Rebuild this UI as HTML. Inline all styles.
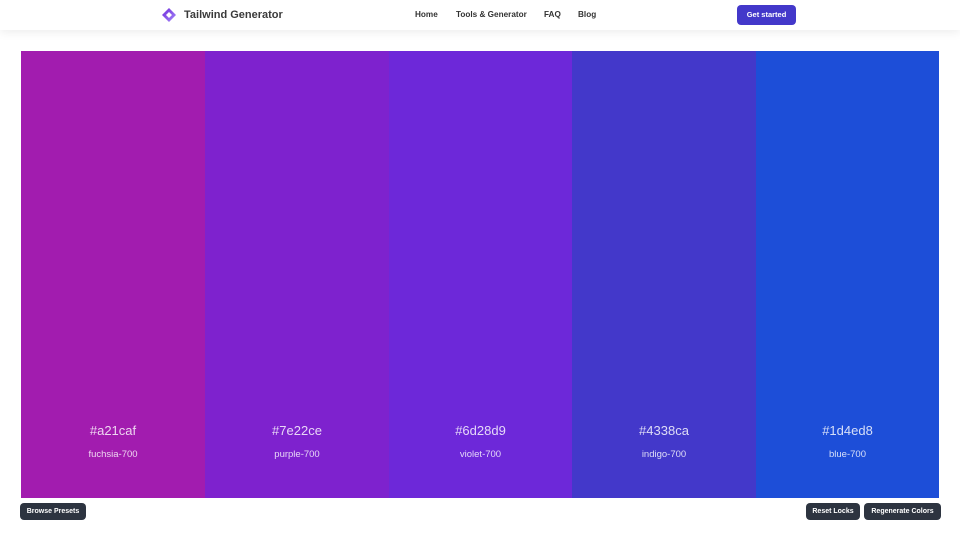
<!DOCTYPE html>
<html><head><meta charset="utf-8"><style>
*{margin:0;padding:0;box-sizing:border-box}
body{width:960px;height:540px;background:#fff;font-family:"Liberation Sans",sans-serif;position:relative;overflow:hidden}
.hdr{position:absolute;left:0;top:0;width:960px;height:30px;background:#fff;box-shadow:0 2px 10px rgba(0,0,0,0.08)}
.logo{position:absolute;left:161px;top:7px}
.brand{position:absolute;left:184px;top:9px;font-size:11px;font-weight:bold;color:#3a3a3a}
.nav{position:absolute;top:10px;font-size:8.2px;font-weight:bold;color:#333}
.btn{position:absolute;left:737px;top:5px;width:59px;height:20px;background:#4338ca;border-radius:4px;color:#fff;font-size:7.5px;font-weight:bold;text-align:center;line-height:20px}
.sw{position:absolute;top:51px;height:447px;color:rgba(255,255,255,0.82);text-align:center}
.hex{position:absolute;top:372px;width:100%;font-size:13px}
.nm{position:absolute;top:398px;width:100%;font-size:9.5px}
.b{position:absolute;top:503px;height:17px;background:#2d3440;border-radius:4px;color:#fff;font-size:7px;font-weight:bold;line-height:18px;text-align:center}
</style></head><body>
<div class="hdr">
<svg class="logo" width="16" height="16" viewBox="0 0 16 16"><defs><linearGradient id="g" x1="0" y1="0" x2="1" y2="1"><stop offset="0" stop-color="#6d28d9"/><stop offset="1" stop-color="#a78bfa"/></linearGradient></defs><path d="M8 1L15 8L8 15L1 8Z" fill="url(#g)"/><path d="M8 5L11 8L8 11L5 8Z" fill="#fff"/></svg>
<div class="brand">Tailwind Generator</div>
<div class="nav" style="left:415px">Home</div>
<div class="nav" style="left:456px">Tools &amp; Generator</div>
<div class="nav" style="left:544px">FAQ</div>
<div class="nav" style="left:578px">Blog</div>
<div class="btn">Get started</div>
</div>
<div class="sw" style="left:21px;width:184px;background:#a21caf"><div class="hex">#a21caf</div><div class="nm">fuchsia-700</div></div>
<div class="sw" style="left:205px;width:184px;background:#7e22ce"><div class="hex">#7e22ce</div><div class="nm">purple-700</div></div>
<div class="sw" style="left:389px;width:183px;background:#6d28d9"><div class="hex">#6d28d9</div><div class="nm">violet-700</div></div>
<div class="sw" style="left:572px;width:184px;background:#4338ca"><div class="hex">#4338ca</div><div class="nm">indigo-700</div></div>
<div class="sw" style="left:756px;width:183px;background:#1d4ed8"><div class="hex">#1d4ed8</div><div class="nm">blue-700</div></div>
<div class="b" style="left:20px;width:66px">Browse Presets</div>
<div class="b" style="left:806px;width:54px">Reset Locks</div>
<div class="b" style="left:864px;width:77px">Regenerate Colors</div>
</body></html>
